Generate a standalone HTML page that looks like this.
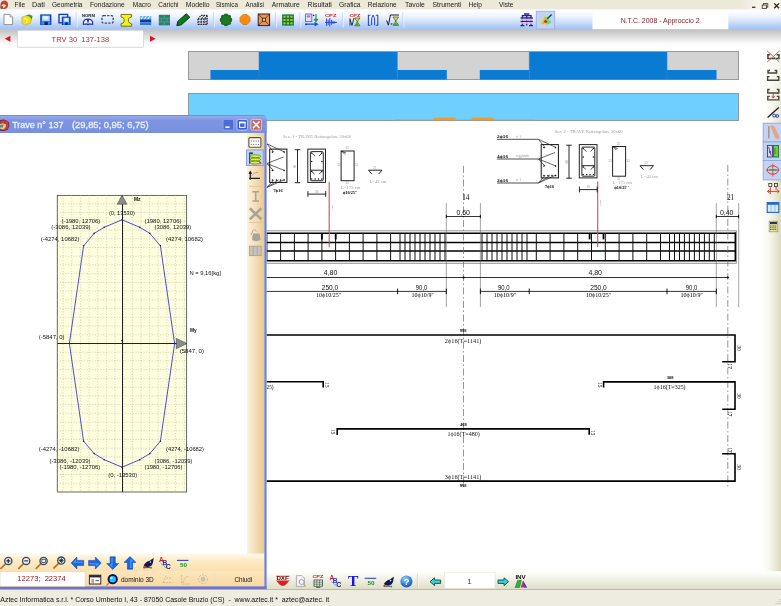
<!DOCTYPE html>
<html><head><meta charset="utf-8"><title>Aztec</title>
<style>
html,body{margin:0;padding:0;background:#fff;overflow:hidden;}
body{width:781px;height:606px;font-family:"Liberation Sans",sans-serif;}
svg{display:block;position:absolute;left:0;top:0;will-change:transform;}
text{white-space:pre;}
</style></head><body>
<svg width="781" height="606" viewBox="0 0 781 606">
<defs>
<linearGradient id="gTb1" x1="0" y1="0" x2="0" y2="1"><stop offset="0" stop-color="#ffffff"/><stop offset="0.3" stop-color="#f0f5fe"/><stop offset="0.6" stop-color="#cfdffa"/><stop offset="0.88" stop-color="#a8c6f7"/><stop offset="1" stop-color="#a9c3ee"/></linearGradient>
<linearGradient id="gTb2" x1="0" y1="0" x2="0" y2="1"><stop offset="0" stop-color="#c2c2c2"/><stop offset="0.75" stop-color="#fbfbfb"/><stop offset="1" stop-color="#ffffff"/></linearGradient>
<linearGradient id="gRt" x1="0" y1="0" x2="1" y2="0"><stop offset="0" stop-color="#ffffff"/><stop offset="0.3" stop-color="#fcfcf6"/><stop offset="0.6" stop-color="#f0efdf"/><stop offset="1" stop-color="#dbdabc"/></linearGradient>
<linearGradient id="gBt" x1="0" y1="0" x2="0" y2="1"><stop offset="0" stop-color="#ffffff"/><stop offset="0.5" stop-color="#efeee2"/><stop offset="1" stop-color="#dddcc6"/></linearGradient>
<linearGradient id="gWr" x1="0" y1="0" x2="1" y2="0"><stop offset="0" stop-color="#fdf3dd"/><stop offset="1" stop-color="#ebc98f"/></linearGradient>
<linearGradient id="gWb" x1="0" y1="0" x2="0" y2="1"><stop offset="0" stop-color="#fffaf0"/><stop offset="0.35" stop-color="#fdecc8"/><stop offset="1" stop-color="#fbdfae"/></linearGradient>
<linearGradient id="gWb2" x1="0" y1="0" x2="0" y2="1"><stop offset="0" stop-color="#fce6bc"/><stop offset="1" stop-color="#f8d9a2"/></linearGradient>
<linearGradient id="gTitle" x1="0" y1="0" x2="0" y2="1"><stop offset="0" stop-color="#6a80cc"/><stop offset="0.08" stop-color="#94a8ea"/><stop offset="0.3" stop-color="#7e96e2"/><stop offset="1" stop-color="#778fdc"/></linearGradient>
<linearGradient id="gMenuR" x1="0" y1="0" x2="1" y2="0"><stop offset="0" stop-color="#ece9d8"/><stop offset="0.4" stop-color="#f5f3ea"/><stop offset="1" stop-color="#f5f3ea"/></linearGradient>
<linearGradient id="gRtFade" x1="0" y1="0" x2="0" y2="1"><stop offset="0" stop-color="#ffffff" stop-opacity="0.85"/><stop offset="1" stop-color="#ffffff" stop-opacity="0"/></linearGradient>
</defs>
<rect x="0" y="0" width="781" height="606" fill="#ffffff" />
<rect x="0" y="0" width="781" height="9.7" fill="#ece9d8" />
<rect x="740" y="0" width="41" height="9.4" fill="url(#gMenuR)" />
<rect x="0" y="9.6" width="781" height="20.6" fill="url(#gTb1)" />
<rect x="0" y="30" width="781" height="18" fill="url(#gTb2)" />
<rect x="760" y="47" width="21" height="524.5" fill="url(#gRt)" />
<rect x="760" y="47" width="21" height="110" fill="url(#gRtFade)" />
<rect x="266" y="571.5" width="515" height="18" fill="url(#gBt)" />
<line x1="266" y1="589.5" x2="781" y2="589.5" stroke="#b3ae9a" stroke-width="1" />
<rect x="0" y="589.8" width="781" height="16.2" fill="#eeece0" />
<rect x="188.5" y="51.5" width="550" height="28" fill="#d3d3d3" stroke="#9a9a9a" stroke-width="1" />
<rect x="210.5" y="70" width="49" height="9.5" fill="#0a7bd2" />
<rect x="259" y="52" width="138.3" height="27.5" fill="#0a7bd2" />
<rect x="397.3" y="70" width="49.5" height="9.5" fill="#0a7bd2" />
<rect x="479.8" y="70" width="49.5" height="9.5" fill="#0a7bd2" />
<rect x="529.3" y="52" width="137.7" height="27.5" fill="#0a7bd2" />
<rect x="667" y="70" width="49.5" height="9.5" fill="#0a7bd2" />
<line x1="259" y1="52" x2="259" y2="79.5" stroke="#3f7fb8" stroke-width="0.6" />
<line x1="397.3" y1="52" x2="397.3" y2="79.5" stroke="#3f7fb8" stroke-width="0.6" />
<line x1="529.3" y1="52" x2="529.3" y2="79.5" stroke="#3f7fb8" stroke-width="0.6" />
<line x1="667" y1="52" x2="667" y2="79.5" stroke="#3f7fb8" stroke-width="0.6" />
<rect x="188.5" y="93.5" width="550" height="27" fill="#6fd0ff" stroke="#8a9aa0" stroke-width="1" />
<rect x="433.5" y="117.6" width="22" height="2.6" fill="#f39a2c" />
<rect x="471.5" y="117.6" width="22" height="2.6" fill="#f39a2c" />
<line x1="395" y1="119.8" x2="535" y2="119.8" stroke="#c8a070" stroke-width="0.8" />
<g id="draw">
<line x1="266" y1="230.8" x2="736.4" y2="230.8" stroke="#666" stroke-width="0.7" />
<line x1="266" y1="263.3" x2="736.4" y2="263.3" stroke="#666" stroke-width="0.7" />
<line x1="736.4" y1="230.8" x2="736.4" y2="263.3" stroke="#666" stroke-width="0.7" />
<line x1="266" y1="233.2" x2="735.3" y2="233.2" stroke="#000" stroke-width="1.5" />
<line x1="266" y1="242.4" x2="735.3" y2="242.4" stroke="#000" stroke-width="1.5" />
<line x1="266" y1="251.1" x2="735.3" y2="251.1" stroke="#000" stroke-width="1.5" />
<line x1="266" y1="260.7" x2="735.3" y2="260.7" stroke="#000" stroke-width="1.5" />
<line x1="735.3" y1="232.3" x2="735.3" y2="261.3" stroke="#000" stroke-width="1.5" />
<line x1="266.9" y1="233" x2="266.9" y2="260.6" stroke="#111" stroke-width="1.0" />
<line x1="280.6" y1="233" x2="280.6" y2="260.6" stroke="#111" stroke-width="1.0" />
<line x1="294.4" y1="233" x2="294.4" y2="260.6" stroke="#111" stroke-width="1.0" />
<line x1="308.1" y1="233" x2="308.1" y2="260.6" stroke="#111" stroke-width="1.0" />
<line x1="321.9" y1="233" x2="321.9" y2="260.6" stroke="#111" stroke-width="1.0" />
<line x1="335.6" y1="233" x2="335.6" y2="260.6" stroke="#111" stroke-width="1.0" />
<line x1="349.4" y1="233" x2="349.4" y2="260.6" stroke="#111" stroke-width="1.0" />
<line x1="363.1" y1="233" x2="363.1" y2="260.6" stroke="#111" stroke-width="1.0" />
<line x1="376.9" y1="233" x2="376.9" y2="260.6" stroke="#111" stroke-width="1.0" />
<line x1="390.6" y1="233" x2="390.6" y2="260.6" stroke="#111" stroke-width="1.0" />
<line x1="400.0" y1="233" x2="400.0" y2="260.6" stroke="#111" stroke-width="1.0" />
<line x1="405.0" y1="233" x2="405.0" y2="260.6" stroke="#111" stroke-width="1.0" />
<line x1="410.0" y1="233" x2="410.0" y2="260.6" stroke="#111" stroke-width="1.0" />
<line x1="415.0" y1="233" x2="415.0" y2="260.6" stroke="#111" stroke-width="1.0" />
<line x1="420.0" y1="233" x2="420.0" y2="260.6" stroke="#111" stroke-width="1.0" />
<line x1="425.0" y1="233" x2="425.0" y2="260.6" stroke="#111" stroke-width="1.0" />
<line x1="430.0" y1="233" x2="430.0" y2="260.6" stroke="#111" stroke-width="1.0" />
<line x1="435.0" y1="233" x2="435.0" y2="260.6" stroke="#111" stroke-width="1.0" />
<line x1="440.0" y1="233" x2="440.0" y2="260.6" stroke="#111" stroke-width="1.0" />
<line x1="445.0" y1="233" x2="445.0" y2="260.6" stroke="#111" stroke-width="1.0" />
<line x1="482.0" y1="233" x2="482.0" y2="260.6" stroke="#111" stroke-width="1.0" />
<line x1="487.0" y1="233" x2="487.0" y2="260.6" stroke="#111" stroke-width="1.0" />
<line x1="492.0" y1="233" x2="492.0" y2="260.6" stroke="#111" stroke-width="1.0" />
<line x1="497.0" y1="233" x2="497.0" y2="260.6" stroke="#111" stroke-width="1.0" />
<line x1="502.0" y1="233" x2="502.0" y2="260.6" stroke="#111" stroke-width="1.0" />
<line x1="507.0" y1="233" x2="507.0" y2="260.6" stroke="#111" stroke-width="1.0" />
<line x1="512.0" y1="233" x2="512.0" y2="260.6" stroke="#111" stroke-width="1.0" />
<line x1="517.0" y1="233" x2="517.0" y2="260.6" stroke="#111" stroke-width="1.0" />
<line x1="522.0" y1="233" x2="522.0" y2="260.6" stroke="#111" stroke-width="1.0" />
<line x1="527.0" y1="233" x2="527.0" y2="260.6" stroke="#111" stroke-width="1.0" />
<line x1="536.3" y1="233" x2="536.3" y2="260.6" stroke="#111" stroke-width="1.0" />
<line x1="550.1" y1="233" x2="550.1" y2="260.6" stroke="#111" stroke-width="1.0" />
<line x1="563.9" y1="233" x2="563.9" y2="260.6" stroke="#111" stroke-width="1.0" />
<line x1="577.7" y1="233" x2="577.7" y2="260.6" stroke="#111" stroke-width="1.0" />
<line x1="591.5" y1="233" x2="591.5" y2="260.6" stroke="#111" stroke-width="1.0" />
<line x1="605.3" y1="233" x2="605.3" y2="260.6" stroke="#111" stroke-width="1.0" />
<line x1="619.1" y1="233" x2="619.1" y2="260.6" stroke="#111" stroke-width="1.0" />
<line x1="632.9" y1="233" x2="632.9" y2="260.6" stroke="#111" stroke-width="1.0" />
<line x1="646.7" y1="233" x2="646.7" y2="260.6" stroke="#111" stroke-width="1.0" />
<line x1="660.5" y1="233" x2="660.5" y2="260.6" stroke="#111" stroke-width="1.0" />
<line x1="669.5" y1="233" x2="669.5" y2="260.6" stroke="#111" stroke-width="1.0" />
<line x1="674.5" y1="233" x2="674.5" y2="260.6" stroke="#111" stroke-width="1.0" />
<line x1="679.5" y1="233" x2="679.5" y2="260.6" stroke="#111" stroke-width="1.0" />
<line x1="684.4" y1="233" x2="684.4" y2="260.6" stroke="#111" stroke-width="1.0" />
<line x1="689.4" y1="233" x2="689.4" y2="260.6" stroke="#111" stroke-width="1.0" />
<line x1="694.4" y1="233" x2="694.4" y2="260.6" stroke="#111" stroke-width="1.0" />
<line x1="699.4" y1="233" x2="699.4" y2="260.6" stroke="#111" stroke-width="1.0" />
<line x1="704.4" y1="233" x2="704.4" y2="260.6" stroke="#111" stroke-width="1.0" />
<line x1="709.3" y1="233" x2="709.3" y2="260.6" stroke="#111" stroke-width="1.0" />
<line x1="714.3" y1="233" x2="714.3" y2="260.6" stroke="#111" stroke-width="1.0" />
<line x1="321.9" y1="233" x2="321.9" y2="239.4" stroke="#000" stroke-width="1.8" />
<line x1="335.7" y1="233" x2="335.7" y2="239.4" stroke="#000" stroke-width="1.8" />
<line x1="589.6" y1="233" x2="589.6" y2="239.4" stroke="#000" stroke-width="1.8" />
<line x1="603.5" y1="233" x2="603.5" y2="239.4" stroke="#000" stroke-width="1.8" />
<line x1="329.2" y1="181.7" x2="329.2" y2="247.3" stroke="#c8505a" stroke-width="1.1" />
<line x1="597.7" y1="181.5" x2="597.7" y2="247.0" stroke="#c8505a" stroke-width="1.1" />
<text x="331.5" y="205" font-family="Liberation Serif, sans-serif" font-size="2.6" fill="#b06068" transform="rotate(90 331.5 205)">Sez.1</text>
<text x="600" y="200" font-family="Liberation Serif, sans-serif" font-size="2.6" fill="#b06068" transform="rotate(90 600 200)">Sez.2</text>
<line x1="463.5" y1="166" x2="463.5" y2="487" stroke="#6a6a6a" stroke-width="0.7" stroke-dasharray="7 2.5 1.5 2.5"/>
<line x1="727.8" y1="165" x2="727.8" y2="487" stroke="#6a6a6a" stroke-width="0.7" stroke-dasharray="7 2.5 1.5 2.5"/>
<line x1="446.3" y1="203" x2="446.3" y2="307" stroke="#666" stroke-width="0.6" />
<line x1="480.4" y1="203" x2="480.4" y2="307" stroke="#666" stroke-width="0.6" />
<line x1="716.3" y1="203" x2="716.3" y2="307" stroke="#666" stroke-width="0.6" />
<line x1="738.7" y1="203" x2="738.7" y2="307" stroke="#666" stroke-width="0.6" />
<line x1="446.3" y1="216.5" x2="480.4" y2="216.5" stroke="#000" stroke-width="0.8" />
<line x1="716.3" y1="216.5" x2="738.7" y2="216.5" stroke="#000" stroke-width="0.8" />
<line x1="446.3" y1="214.8" x2="446.3" y2="218.2" stroke="#000" stroke-width="0.9" />
<line x1="480.4" y1="214.8" x2="480.4" y2="218.2" stroke="#000" stroke-width="0.9" />
<line x1="716.3" y1="214.8" x2="716.3" y2="218.2" stroke="#000" stroke-width="0.9" />
<line x1="738.7" y1="214.8" x2="738.7" y2="218.2" stroke="#000" stroke-width="0.9" />
<text x="462.2" y="199.6" font-family="Liberation Serif, sans-serif" font-size="8" fill="#111" textLength="7.2" lengthAdjust="spacingAndGlyphs" >14</text>
<text x="727" y="199.6" font-family="Liberation Serif, sans-serif" font-size="8" fill="#111" textLength="7.2" lengthAdjust="spacingAndGlyphs" >21</text>
<text x="456.4" y="215.0" font-family="Liberation Sans, sans-serif" font-size="8" fill="#111" textLength="13.6" lengthAdjust="spacingAndGlyphs" >0,60</text>
<text x="719.9" y="215.0" font-family="Liberation Sans, sans-serif" font-size="8" fill="#111" textLength="13.6" lengthAdjust="spacingAndGlyphs" >0,40</text>
<line x1="266" y1="277.5" x2="463.6" y2="277.5" stroke="#000" stroke-width="0.8" />
<line x1="463.6" y1="277.5" x2="727.8" y2="277.5" stroke="#000" stroke-width="0.8" />
<circle cx="463.6" cy="277.5" r="1.1" fill="#000"/><circle cx="727.8" cy="277.5" r="1.1" fill="#000"/>
<text x="323.8" y="275.1" font-family="Liberation Sans, sans-serif" font-size="8" fill="#111" textLength="13.6" lengthAdjust="spacingAndGlyphs" >4,80</text>
<text x="588.4" y="275.1" font-family="Liberation Sans, sans-serif" font-size="8" fill="#111" textLength="13.6" lengthAdjust="spacingAndGlyphs" >4,80</text>
<line x1="266" y1="291.4" x2="446.3" y2="291.4" stroke="#000" stroke-width="0.8" />
<line x1="480.4" y1="291.4" x2="716.3" y2="291.4" stroke="#000" stroke-width="0.8" />
<line x1="397.6" y1="288.6" x2="397.6" y2="294.2" stroke="#000" stroke-width="0.9" />
<line x1="446.3" y1="288.6" x2="446.3" y2="294.2" stroke="#000" stroke-width="0.9" />
<line x1="480.4" y1="288.6" x2="480.4" y2="294.2" stroke="#000" stroke-width="0.9" />
<line x1="529.2" y1="288.6" x2="529.2" y2="294.2" stroke="#000" stroke-width="0.9" />
<line x1="667.0" y1="288.6" x2="667.0" y2="294.2" stroke="#000" stroke-width="0.9" />
<line x1="716.3" y1="288.6" x2="716.3" y2="294.2" stroke="#000" stroke-width="0.9" />
<text x="321.8" y="289.6" font-family="Liberation Sans, sans-serif" font-size="6.6" fill="#111" textLength="16.5" lengthAdjust="spacingAndGlyphs" >250,0</text>
<text x="590.3" y="290.0" font-family="Liberation Sans, sans-serif" font-size="6.6" fill="#111" textLength="16.5" lengthAdjust="spacingAndGlyphs" >250,0</text>
<text x="415.8" y="290.0" font-family="Liberation Sans, sans-serif" font-size="6.6" fill="#111" textLength="11.6" lengthAdjust="spacingAndGlyphs" >90,0</text>
<text x="498.0" y="290.0" font-family="Liberation Sans, sans-serif" font-size="6.6" fill="#111" textLength="11.6" lengthAdjust="spacingAndGlyphs" >90,0</text>
<text x="685.8" y="290.0" font-family="Liberation Sans, sans-serif" font-size="6.6" fill="#111" textLength="11.6" lengthAdjust="spacingAndGlyphs" >90,0</text>
<text x="316.0" y="297.2" font-family="Liberation Serif, sans-serif" font-size="5.6" fill="#000" textLength="25" lengthAdjust="spacingAndGlyphs" >10ϕ10/25''</text>
<text x="586.0" y="297.2" font-family="Liberation Serif, sans-serif" font-size="5.6" fill="#000" textLength="25" lengthAdjust="spacingAndGlyphs" >10ϕ10/25''</text>
<text x="411.6" y="297.2" font-family="Liberation Serif, sans-serif" font-size="5.6" fill="#000" textLength="22" lengthAdjust="spacingAndGlyphs" >10ϕ10/9''</text>
<text x="493.8" y="297.2" font-family="Liberation Serif, sans-serif" font-size="5.6" fill="#000" textLength="22" lengthAdjust="spacingAndGlyphs" >10ϕ10/9''</text>
<text x="680.6" y="297.2" font-family="Liberation Serif, sans-serif" font-size="5.6" fill="#000" textLength="22" lengthAdjust="spacingAndGlyphs" >10ϕ10/9''</text>
<path d="M266 335 H735 V361.8 H722.2" fill="none" stroke="#000" stroke-width="1.6" stroke-linejoin="miter"/>
<path d="M266 381.7 H323.2 V387.4" fill="none" stroke="#000" stroke-width="1.6" stroke-linejoin="miter"/>
<path d="M603.6 387.6 V381.9 H735 V409.3 H722.2" fill="none" stroke="#000" stroke-width="1.6" stroke-linejoin="miter"/>
<path d="M337.2 434.9 V428.9 H589.2 V434.8" fill="none" stroke="#000" stroke-width="1.6" stroke-linejoin="miter"/>
<path d="M266 481.1 H735 V453.7 H722.2" fill="none" stroke="#000" stroke-width="1.6" stroke-linejoin="miter"/>
<text x="459.7" y="332.2" font-family="Liberation Serif, sans-serif" font-size="4" fill="#000" textLength="6.8" lengthAdjust="spacingAndGlyphs" font-weight="bold" >998</text>
<text x="444.8" y="342.6" font-family="Liberation Serif, sans-serif" font-size="6" fill="#111" textLength="36.6" lengthAdjust="spacingAndGlyphs" >2ϕ16(T=1141)</text>
<text x="266.5" y="389.2" font-family="Liberation Serif, sans-serif" font-size="6" fill="#111" textLength="7" lengthAdjust="spacingAndGlyphs" >25)</text>
<text x="666.8" y="379.2" font-family="Liberation Serif, sans-serif" font-size="4" fill="#000" textLength="6.8" lengthAdjust="spacingAndGlyphs" font-weight="bold" >308</text>
<text x="653.6" y="389.4" font-family="Liberation Serif, sans-serif" font-size="6" fill="#111" textLength="32" lengthAdjust="spacingAndGlyphs" >1ϕ16(T=325)</text>
<text x="459.9" y="426.2" font-family="Liberation Serif, sans-serif" font-size="4" fill="#000" textLength="6.8" lengthAdjust="spacingAndGlyphs" font-weight="bold" >468</text>
<text x="447.4" y="436.3" font-family="Liberation Serif, sans-serif" font-size="6" fill="#111" textLength="32.4" lengthAdjust="spacingAndGlyphs" >1ϕ16(T=480)</text>
<text x="444.8" y="479.4" font-family="Liberation Serif, sans-serif" font-size="6" fill="#111" textLength="36.6" lengthAdjust="spacingAndGlyphs" >3ϕ16(T=1141)</text>
<text x="459.7" y="486.6" font-family="Liberation Serif, sans-serif" font-size="4" fill="#000" textLength="6.8" lengthAdjust="spacingAndGlyphs" font-weight="bold" >998</text>
<text x="324.8" y="382.3" font-family="Liberation Serif, sans-serif" font-size="5.2" fill="#000" transform="rotate(90 324.8 382.3)">15</text>
<text x="591.4" y="430.2" font-family="Liberation Serif, sans-serif" font-size="5.2" fill="#000" transform="rotate(90 591.4 430.2)">15</text>
<text x="331.0" y="429.2" font-family="Liberation Serif, sans-serif" font-size="5.2" fill="#000" transform="rotate(90 331.0 429.2)">15</text>
<text x="597.6" y="382.2" font-family="Liberation Serif, sans-serif" font-size="5.2" fill="#000" transform="rotate(90 597.6 382.2)">15</text>
<text x="737.4" y="345.6" font-family="Liberation Serif, sans-serif" font-size="5.2" fill="#000" transform="rotate(90 737.4 345.6)">30</text>
<text x="737.4" y="393.4" font-family="Liberation Serif, sans-serif" font-size="5.2" fill="#000" transform="rotate(90 737.4 393.4)">30</text>
<text x="737.4" y="464.6" font-family="Liberation Serif, sans-serif" font-size="5.2" fill="#000" transform="rotate(90 737.4 464.6)">30</text>
<text x="727.6" y="363.6" font-family="Liberation Serif, sans-serif" font-size="5.2" fill="#000" transform="rotate(90 727.6 363.6)">17</text>
<text x="727.6" y="411.2" font-family="Liberation Serif, sans-serif" font-size="5.2" fill="#000" transform="rotate(90 727.6 411.2)">17</text>
<text x="727.6" y="447.4" font-family="Liberation Serif, sans-serif" font-size="5.2" fill="#000" transform="rotate(90 727.6 447.4)">17</text>
<text x="554.5" y="133.4" font-family="Liberation Serif, sans-serif" font-size="4.4" fill="#9a9a9a" textLength="68" lengthAdjust="spacingAndGlyphs" >Sez. 2 - TRAVE Rettangolare 30x60</text>
<line x1="497" y1="139.3" x2="538.4" y2="139.3" stroke="#222" stroke-width="0.8" />
<text x="497" y="137.9" font-family="Liberation Serif, sans-serif" font-size="4.6" fill="#000" textLength="11" lengthAdjust="spacingAndGlyphs" font-weight="bold" >2ϕ16</text>
<text x="516" y="137.70000000000002" font-family="Liberation Serif, sans-serif" font-size="3.2" fill="#999" >n° 1</text>
<line x1="497" y1="159.0" x2="538.4" y2="159.0" stroke="#222" stroke-width="0.8" />
<text x="497" y="157.6" font-family="Liberation Serif, sans-serif" font-size="4.6" fill="#000" textLength="11" lengthAdjust="spacingAndGlyphs" font-weight="bold" >4ϕ16</text>
<text x="516" y="157.4" font-family="Liberation Serif, sans-serif" font-size="3.2" fill="#999" >reggistaffe</text>
<line x1="497" y1="183.0" x2="538.4" y2="183.0" stroke="#222" stroke-width="0.8" />
<text x="497" y="181.6" font-family="Liberation Serif, sans-serif" font-size="4.6" fill="#000" textLength="11" lengthAdjust="spacingAndGlyphs" font-weight="bold" >2ϕ16</text>
<text x="516" y="181.4" font-family="Liberation Serif, sans-serif" font-size="3.2" fill="#999" >n° 1</text>
<rect x="541.2" y="144.6" width="17.2" height="33.3" fill="none" stroke="#111" stroke-width="1.0" />
<line x1="538.4" y1="139.3" x2="556" y2="147.5" stroke="#222" stroke-width="0.7" />
<line x1="538.4" y1="139.3" x2="545" y2="147.5" stroke="#222" stroke-width="0.7" />
<line x1="538.4" y1="159" x2="555" y2="152.5" stroke="#222" stroke-width="0.7" />
<line x1="538.4" y1="159" x2="556" y2="166" stroke="#222" stroke-width="0.7" />
<line x1="538.4" y1="159" x2="545" y2="166" stroke="#222" stroke-width="0.7" />
<line x1="538.4" y1="183" x2="545" y2="175.5" stroke="#222" stroke-width="0.7" />
<line x1="538.4" y1="183" x2="550" y2="175.5" stroke="#222" stroke-width="0.7" />
<line x1="538.4" y1="183" x2="556" y2="175" stroke="#222" stroke-width="0.7" />
<circle cx="544" cy="147.6" r="0.8" fill="#111"/>
<circle cx="555.6" cy="147.6" r="0.8" fill="#111"/>
<circle cx="544" cy="166" r="0.8" fill="#111"/>
<circle cx="555.6" cy="166" r="0.8" fill="#111"/>
<circle cx="544" cy="175.6" r="0.8" fill="#111"/>
<circle cx="548" cy="175.6" r="0.8" fill="#111"/>
<circle cx="552" cy="175.6" r="0.8" fill="#111"/>
<circle cx="555.6" cy="175.6" r="0.8" fill="#111"/>
<text x="545" y="187.8" font-family="Liberation Serif, sans-serif" font-size="4.6" fill="#000" textLength="9" lengthAdjust="spacingAndGlyphs" font-weight="bold" >7ϕ16</text>
<line x1="569" y1="145.2" x2="569" y2="178.2" stroke="#111" stroke-width="0.9" />
<line x1="566.2" y1="145.2" x2="571.8" y2="145.2" stroke="#111" stroke-width="0.9" />
<line x1="566.2" y1="178.2" x2="571.8" y2="178.2" stroke="#111" stroke-width="0.9" />
<text x="567.6" y="163.5" font-family="Liberation Serif, sans-serif" font-size="3.2" fill="#8a8a8a" transform="rotate(-90 567.6 163.5)">60</text>
<rect x="579.3" y="144.6" width="17.7" height="33.3" fill="none" stroke="#222" stroke-width="1.0" />
<rect x="581.9" y="147.1" width="12.9" height="29.1" fill="none" stroke="#111" stroke-width="0.9" rx="1"/>
<line x1="581.9" y1="165.7" x2="594.8" y2="165.7" stroke="#111" stroke-width="0.9" />
<circle cx="583.2" cy="148.6" r="0.75" fill="#111"/>
<circle cx="593.4" cy="148.6" r="0.75" fill="#111"/>
<circle cx="583.2" cy="157" r="0.75" fill="#111"/>
<circle cx="593.4" cy="157" r="0.75" fill="#111"/>
<circle cx="583.2" cy="174.6" r="0.75" fill="#111"/>
<circle cx="586.6" cy="174.6" r="0.75" fill="#111"/>
<circle cx="590" cy="174.6" r="0.75" fill="#111"/>
<circle cx="593.4" cy="174.6" r="0.75" fill="#111"/>
<circle cx="583.2" cy="167" r="0.75" fill="#111"/>
<circle cx="593.4" cy="167" r="0.75" fill="#111"/>
<line x1="583.2" y1="148.6" x2="586.5" y2="151.5" stroke="#111" stroke-width="0.7" />
<line x1="593.4" y1="148.6" x2="590.5" y2="151.5" stroke="#111" stroke-width="0.7" />
<line x1="583.2" y1="167" x2="586" y2="169.5" stroke="#111" stroke-width="0.7" />
<line x1="593.4" y1="167" x2="590.6" y2="169.5" stroke="#111" stroke-width="0.7" />
<line x1="579.4" y1="189.6" x2="597.2" y2="189.6" stroke="#111" stroke-width="0.9" />
<line x1="579.4" y1="186.6" x2="579.4" y2="192.4" stroke="#111" stroke-width="0.9" />
<line x1="597.2" y1="186.6" x2="597.2" y2="192.4" stroke="#111" stroke-width="0.9" />
<text x="586.6" y="188.2" font-family="Liberation Serif, sans-serif" font-size="3.2" fill="#8a8a8a" >30</text>
<rect x="612.6" y="146.5" width="13" height="29.7" fill="none" stroke="#222" stroke-width="1.0" />
<line x1="613" y1="146.6" x2="616.4" y2="150" stroke="#111" stroke-width="0.7" />
<line x1="613" y1="146.6" x2="617.6" y2="148.6" stroke="#111" stroke-width="0.7" />
<text x="617" y="144.6" font-family="Liberation Serif, sans-serif" font-size="3.2" fill="#8a8a8a" >23</text>
<text x="617" y="179.6" font-family="Liberation Serif, sans-serif" font-size="3.2" fill="#8a8a8a" >23</text>
<text x="608.4" y="161.6" font-family="Liberation Serif, sans-serif" font-size="3.2" fill="#8a8a8a" >53</text>
<text x="626.4" y="161.6" font-family="Liberation Serif, sans-serif" font-size="3.2" fill="#8a8a8a" >53</text>
<text x="612.4" y="184.0" font-family="Liberation Serif, sans-serif" font-size="4.2" fill="#9a9a9a" textLength="19.5" lengthAdjust="spacingAndGlyphs" >L=175 cm</text>
<text x="614.2" y="189.2" font-family="Liberation Serif, sans-serif" font-size="4.4" fill="#000" textLength="14.5" lengthAdjust="spacingAndGlyphs" font-weight="bold" >ϕ10/25''</text>
<path d="M643.4 169.6 L640 165.7 H653.5 L650.1 169.6" fill="none" stroke="#111" stroke-width="0.9"/>
<text x="644.6" y="164.0" font-family="Liberation Serif, sans-serif" font-size="3.2" fill="#8a8a8a" >23</text>
<text x="641" y="178.2" font-family="Liberation Serif, sans-serif" font-size="4.2" fill="#9a9a9a" textLength="17" lengthAdjust="spacingAndGlyphs" >L=43 cm</text>
<text x="283.0" y="137.9" font-family="Liberation Serif, sans-serif" font-size="4.4" fill="#9a9a9a" textLength="68" lengthAdjust="spacingAndGlyphs" >Sez. 1 - TRAVE Rettangolare 30x60</text>
<rect x="269.70000000000005" y="149.1" width="17.2" height="33.3" fill="none" stroke="#111" stroke-width="1.0" />
<line x1="266.9" y1="143.8" x2="284.5" y2="152.0" stroke="#222" stroke-width="0.7" />
<line x1="266.9" y1="143.8" x2="273.5" y2="152.0" stroke="#222" stroke-width="0.7" />
<line x1="266.9" y1="163.5" x2="283.5" y2="157.0" stroke="#222" stroke-width="0.7" />
<line x1="266.9" y1="163.5" x2="284.5" y2="170.5" stroke="#222" stroke-width="0.7" />
<line x1="266.9" y1="163.5" x2="273.5" y2="170.5" stroke="#222" stroke-width="0.7" />
<line x1="266.9" y1="187.5" x2="273.5" y2="180.0" stroke="#222" stroke-width="0.7" />
<line x1="266.9" y1="187.5" x2="278.5" y2="180.0" stroke="#222" stroke-width="0.7" />
<line x1="266.9" y1="187.5" x2="284.5" y2="179.5" stroke="#222" stroke-width="0.7" />
<circle cx="272.5" cy="152.1" r="0.8" fill="#111"/>
<circle cx="284.1" cy="152.1" r="0.8" fill="#111"/>
<circle cx="272.5" cy="170.5" r="0.8" fill="#111"/>
<circle cx="284.1" cy="170.5" r="0.8" fill="#111"/>
<circle cx="272.5" cy="180.1" r="0.8" fill="#111"/>
<circle cx="276.5" cy="180.1" r="0.8" fill="#111"/>
<circle cx="280.5" cy="180.1" r="0.8" fill="#111"/>
<circle cx="284.1" cy="180.1" r="0.8" fill="#111"/>
<text x="273.5" y="192.3" font-family="Liberation Serif, sans-serif" font-size="4.6" fill="#000" textLength="9" lengthAdjust="spacingAndGlyphs" font-weight="bold" >7ϕ16</text>
<line x1="297.5" y1="149.7" x2="297.5" y2="182.7" stroke="#111" stroke-width="0.9" />
<line x1="294.70000000000005" y1="149.7" x2="300.29999999999995" y2="149.7" stroke="#111" stroke-width="0.9" />
<line x1="294.70000000000005" y1="182.7" x2="300.29999999999995" y2="182.7" stroke="#111" stroke-width="0.9" />
<text x="296.1" y="168.0" font-family="Liberation Serif, sans-serif" font-size="3.2" fill="#8a8a8a" transform="rotate(-90 296.1 168.0)">60</text>
<rect x="307.79999999999995" y="149.1" width="17.7" height="33.3" fill="none" stroke="#222" stroke-width="1.0" />
<rect x="310.4" y="151.6" width="12.9" height="29.1" fill="none" stroke="#111" stroke-width="0.9" rx="1"/>
<line x1="310.4" y1="170.2" x2="323.29999999999995" y2="170.2" stroke="#111" stroke-width="0.9" />
<circle cx="311.70000000000005" cy="153.1" r="0.75" fill="#111"/>
<circle cx="321.9" cy="153.1" r="0.75" fill="#111"/>
<circle cx="311.70000000000005" cy="161.5" r="0.75" fill="#111"/>
<circle cx="321.9" cy="161.5" r="0.75" fill="#111"/>
<circle cx="311.70000000000005" cy="179.1" r="0.75" fill="#111"/>
<circle cx="315.1" cy="179.1" r="0.75" fill="#111"/>
<circle cx="318.5" cy="179.1" r="0.75" fill="#111"/>
<circle cx="321.9" cy="179.1" r="0.75" fill="#111"/>
<circle cx="311.70000000000005" cy="171.5" r="0.75" fill="#111"/>
<circle cx="321.9" cy="171.5" r="0.75" fill="#111"/>
<line x1="311.70000000000005" y1="153.1" x2="315.0" y2="156.0" stroke="#111" stroke-width="0.7" />
<line x1="321.9" y1="153.1" x2="319.0" y2="156.0" stroke="#111" stroke-width="0.7" />
<line x1="311.70000000000005" y1="171.5" x2="314.5" y2="174.0" stroke="#111" stroke-width="0.7" />
<line x1="321.9" y1="171.5" x2="319.1" y2="174.0" stroke="#111" stroke-width="0.7" />
<line x1="307.9" y1="194.1" x2="325.70000000000005" y2="194.1" stroke="#111" stroke-width="0.9" />
<line x1="307.9" y1="191.1" x2="307.9" y2="196.9" stroke="#111" stroke-width="0.9" />
<line x1="325.70000000000005" y1="191.1" x2="325.70000000000005" y2="196.9" stroke="#111" stroke-width="0.9" />
<text x="315.1" y="192.7" font-family="Liberation Serif, sans-serif" font-size="3.2" fill="#8a8a8a" >30</text>
<rect x="341.1" y="151.0" width="13" height="29.7" fill="none" stroke="#222" stroke-width="1.0" />
<line x1="341.5" y1="151.1" x2="344.9" y2="154.5" stroke="#111" stroke-width="0.7" />
<line x1="341.5" y1="151.1" x2="346.1" y2="153.1" stroke="#111" stroke-width="0.7" />
<text x="345.5" y="149.1" font-family="Liberation Serif, sans-serif" font-size="3.2" fill="#8a8a8a" >23</text>
<text x="345.5" y="184.1" font-family="Liberation Serif, sans-serif" font-size="3.2" fill="#8a8a8a" >23</text>
<text x="336.9" y="166.1" font-family="Liberation Serif, sans-serif" font-size="3.2" fill="#8a8a8a" >53</text>
<text x="354.9" y="166.1" font-family="Liberation Serif, sans-serif" font-size="3.2" fill="#8a8a8a" >53</text>
<text x="340.9" y="188.5" font-family="Liberation Serif, sans-serif" font-size="4.2" fill="#9a9a9a" textLength="19.5" lengthAdjust="spacingAndGlyphs" >L=175 cm</text>
<text x="342.70000000000005" y="193.7" font-family="Liberation Serif, sans-serif" font-size="4.4" fill="#000" textLength="14.5" lengthAdjust="spacingAndGlyphs" font-weight="bold" >ϕ10/25''</text>
<path d="M371.9 174.1 L368.5 170.2 H382.0 L378.6 174.1" fill="none" stroke="#111" stroke-width="0.9"/>
<text x="373.1" y="168.5" font-family="Liberation Serif, sans-serif" font-size="3.2" fill="#8a8a8a" >23</text>
<text x="369.5" y="182.7" font-family="Liberation Serif, sans-serif" font-size="4.2" fill="#9a9a9a" textLength="17" lengthAdjust="spacingAndGlyphs" >L=43 cm</text>
</g>
<g id="win">
<rect x="0" y="131" width="266.6" height="458" fill="#ffffff" />
<rect x="264.2" y="120" width="2.4" height="468" fill="#6f80d6" />
<rect x="247" y="133" width="17.2" height="421" fill="url(#gWr)" />
<rect x="0" y="553.6" width="264.2" height="17.6" fill="url(#gWb)" />
<rect x="0" y="571" width="264.2" height="16" fill="url(#gWb2)" />
<rect x="0" y="586.4" width="266.6" height="3.2" fill="#6e72c8" />
<path d="M0 115 H262.6 Q266.6 115 266.6 119 V133 H0 Z" fill="url(#gTitle)"/>
<path d="M0 120.4 Q5 118.6 8.6 122.4 Q9.6 126.4 7.6 129.4 Q4 131.6 0 130.2 Z" fill="#d8382a" stroke="#3a2a5a" stroke-width="0.7"/>
<path d="M0 124 Q3 122.6 6 124.6 Q6.4 127.6 4 129 Q1.6 129.6 0 128.6Z" fill="#f0c8a0"/><path d="M0 125 L3.6 124.6 L3 127.4 L0 127.6Z" fill="#5a8a7a"/>
<text x="12.2" y="128.0" font-family="Liberation Sans, sans-serif" font-size="8.2" fill="#e6ecfc" textLength="51.2" lengthAdjust="spacingAndGlyphs" stroke="#e6ecfc" stroke-width="0.35">Trave n° 137</text>
<text x="72" y="128.0" font-family="Liberation Sans, sans-serif" font-size="8.2" fill="#e6ecfc" textLength="76.6" lengthAdjust="spacingAndGlyphs" stroke="#e6ecfc" stroke-width="0.35">(29,85; 0,95; 6,75)</text>
<rect x="223" y="119.4" width="10.7" height="10.7" rx="1.6" fill="#4b6cd9" stroke="#8ea4ec" stroke-width="0.9"/>
<rect x="236.9" y="119.4" width="10.7" height="10.7" rx="1.6" fill="#3f60cf" stroke="#c4d2f8" stroke-width="0.9"/>
<rect x="250.9" y="119.4" width="10.7" height="10.7" rx="1.6" fill="#c66864" stroke="#e8c8d0" stroke-width="0.9"/>
<rect x="225.4" y="126.4" width="4.2" height="1.6" fill="#ffffff" />
<rect x="239.6" y="122.2" width="5.4" height="5.2" fill="none" stroke="#ffffff" stroke-width="1.0" />
<line x1="239.1" y1="122.6" x2="245.5" y2="122.6" stroke="#fff" stroke-width="1.6" />
<path d="M253.4 121.9 L259.1 127.6 M259.1 121.9 L253.4 127.6" stroke="#fff" stroke-width="1.5" stroke-linecap="round"/>
<rect x="57.3" y="195.4" width="129.3" height="296.6" fill="#ffffe0" stroke="#555" stroke-width="0.9" />
<path d="M63.10 195.4 V492.0 M71.75 195.4 V492.0 M80.40 195.4 V492.0 M89.05 195.4 V492.0 M97.70 195.4 V492.0 M106.35 195.4 V492.0 M115.00 195.4 V492.0 M123.65 195.4 V492.0 M132.30 195.4 V492.0 M140.95 195.4 V492.0 M149.60 195.4 V492.0 M158.25 195.4 V492.0 M166.90 195.4 V492.0 M175.55 195.4 V492.0 M184.20 195.4 V492.0 M57.3 352.23 H186.6 M57.3 334.77 H186.6 M57.3 360.96 H186.6 M57.3 326.04 H186.6 M57.3 369.69 H186.6 M57.3 317.31 H186.6 M57.3 378.42 H186.6 M57.3 308.58 H186.6 M57.3 387.15 H186.6 M57.3 299.85 H186.6 M57.3 395.88 H186.6 M57.3 291.12 H186.6 M57.3 404.61 H186.6 M57.3 282.39 H186.6 M57.3 413.34 H186.6 M57.3 273.66 H186.6 M57.3 422.07 H186.6 M57.3 264.93 H186.6 M57.3 430.80 H186.6 M57.3 256.20 H186.6 M57.3 439.53 H186.6 M57.3 247.47 H186.6 M57.3 448.26 H186.6 M57.3 238.74 H186.6 M57.3 456.99 H186.6 M57.3 230.01 H186.6 M57.3 465.72 H186.6 M57.3 221.28 H186.6 M57.3 474.45 H186.6 M57.3 212.55 H186.6 M57.3 483.18 H186.6 M57.3 203.82 H186.6 M57.3 491.91 H186.6" stroke="#bdbda6" stroke-width="0.7" stroke-dasharray="1 1.7" fill="none"/>
<line x1="122.5" y1="195.4" x2="122.5" y2="492.0" stroke="#222" stroke-width="1" />
<line x1="57.3" y1="343.5" x2="186.6" y2="343.5" stroke="#222" stroke-width="1" />
<path d="M122.0 195.2 L126.9 204.2 H117.3 Z" fill="#8c8c8c" stroke="#444" stroke-width="0.6"/>
<path d="M186.9 343.5 L176.4 338.4 V348.8 Z" fill="#8c8c8c" stroke="#444" stroke-width="0.6"/>
<circle cx="122.0" cy="340.6" r="0.9" fill="#222"/>
<polygon points="122.0,219.8 139.8,227.3 149.8,233.4 160.4,245.8 174.6,343.5 160.4,441.2 149.8,453.6 139.8,459.7 122.0,467.2 104.2,459.7 94.2,453.6 83.6,441.2 69.4,343.5 83.6,245.8 94.2,233.4 104.2,227.3" fill="none" stroke="#3a3ad0" stroke-width="0.9"/>
<circle cx="122.0" cy="219.8" r="0.8" fill="#223"/>
<circle cx="139.8" cy="227.3" r="0.8" fill="#223"/>
<circle cx="149.8" cy="233.4" r="0.8" fill="#223"/>
<circle cx="160.4" cy="245.8" r="0.8" fill="#223"/>
<circle cx="174.6" cy="343.5" r="0.8" fill="#223"/>
<circle cx="160.4" cy="441.2" r="0.8" fill="#223"/>
<circle cx="149.8" cy="453.6" r="0.8" fill="#223"/>
<circle cx="139.8" cy="459.7" r="0.8" fill="#223"/>
<circle cx="122.0" cy="467.2" r="0.8" fill="#223"/>
<circle cx="104.2" cy="459.7" r="0.8" fill="#223"/>
<circle cx="94.2" cy="453.6" r="0.8" fill="#223"/>
<circle cx="83.6" cy="441.2" r="0.8" fill="#223"/>
<circle cx="69.4" cy="343.5" r="0.8" fill="#223"/>
<circle cx="83.6" cy="245.8" r="0.8" fill="#223"/>
<circle cx="94.2" cy="233.4" r="0.8" fill="#223"/>
<circle cx="104.2" cy="227.3" r="0.8" fill="#223"/>
<text x="108.9" y="214.7" font-family="Liberation Sans, sans-serif" font-size="5.9" fill="#111" textLength="25.9" lengthAdjust="spacingAndGlyphs" >(0, 13530)</text>
<text x="61.5" y="222.6" font-family="Liberation Sans, sans-serif" font-size="5.9" fill="#111" textLength="38.7" lengthAdjust="spacingAndGlyphs" >(-1980, 12706)</text>
<text x="51.2" y="228.6" font-family="Liberation Sans, sans-serif" font-size="5.9" fill="#111" textLength="39.4" lengthAdjust="spacingAndGlyphs" >(-3086, 12039)</text>
<text x="40.8" y="241.0" font-family="Liberation Sans, sans-serif" font-size="5.9" fill="#111" textLength="38.7" lengthAdjust="spacingAndGlyphs" >(-4274, 10682)</text>
<text x="144.5" y="222.6" font-family="Liberation Sans, sans-serif" font-size="5.9" fill="#111" textLength="37" lengthAdjust="spacingAndGlyphs" >(1980, 12706)</text>
<text x="154.5" y="228.6" font-family="Liberation Sans, sans-serif" font-size="5.9" fill="#111" textLength="36.8" lengthAdjust="spacingAndGlyphs" >(3086, 12039)</text>
<text x="166" y="241.0" font-family="Liberation Sans, sans-serif" font-size="5.9" fill="#111" textLength="37" lengthAdjust="spacingAndGlyphs" >(4274, 10682)</text>
<text x="38.7" y="339.4" font-family="Liberation Sans, sans-serif" font-size="5.9" fill="#111" textLength="25.9" lengthAdjust="spacingAndGlyphs" >(-5847, 0)</text>
<text x="179.7" y="352.5" font-family="Liberation Sans, sans-serif" font-size="5.9" fill="#111" textLength="24.3" lengthAdjust="spacingAndGlyphs" >(5847, 0)</text>
<text x="38.7" y="451.0" font-family="Liberation Sans, sans-serif" font-size="5.9" fill="#111" textLength="40.8" lengthAdjust="spacingAndGlyphs" >(-4274, -10682)</text>
<text x="49.4" y="463.0" font-family="Liberation Sans, sans-serif" font-size="5.9" fill="#111" textLength="41.2" lengthAdjust="spacingAndGlyphs" >(-3086, -12039)</text>
<text x="59.5" y="469.3" font-family="Liberation Sans, sans-serif" font-size="5.9" fill="#111" textLength="40.7" lengthAdjust="spacingAndGlyphs" >(-1980, -12706)</text>
<text x="108.2" y="476.9" font-family="Liberation Sans, sans-serif" font-size="5.9" fill="#111" textLength="29" lengthAdjust="spacingAndGlyphs" >(0, -13530)</text>
<text x="166" y="451.0" font-family="Liberation Sans, sans-serif" font-size="5.9" fill="#111" textLength="38" lengthAdjust="spacingAndGlyphs" >(4274, -10682)</text>
<text x="154.5" y="463.0" font-family="Liberation Sans, sans-serif" font-size="5.9" fill="#111" textLength="38" lengthAdjust="spacingAndGlyphs" >(3086, -12039)</text>
<text x="144.5" y="469.3" font-family="Liberation Sans, sans-serif" font-size="5.9" fill="#111" textLength="38" lengthAdjust="spacingAndGlyphs" >(1980, -12706)</text>
<text x="134" y="201.0" font-family="Liberation Sans, sans-serif" font-size="5.4" fill="#111" textLength="6.6" lengthAdjust="spacingAndGlyphs" font-weight="bold" >Mz</text>
<text x="190" y="331.6" font-family="Liberation Sans, sans-serif" font-size="5.4" fill="#111" textLength="6.8" lengthAdjust="spacingAndGlyphs" font-weight="bold" >My</text>
<text x="189.4" y="274.6" font-family="Liberation Sans, sans-serif" font-size="5.9" fill="#111" textLength="31.6" lengthAdjust="spacingAndGlyphs" >N = 9,16[kg]</text>
<rect x="0" y="571.6" width="85" height="14.6" fill="#ffffff" stroke="#e4d4b0" stroke-width="0.6" />
<text x="17.3" y="581.4" font-family="Liberation Sans, sans-serif" font-size="7" fill="#8a2020" textLength="48.4" lengthAdjust="spacingAndGlyphs" >12273;  22374</text>
<text x="121" y="581.6" font-family="Liberation Sans, sans-serif" font-size="7" fill="#111" textLength="32.8" lengthAdjust="spacingAndGlyphs" >dominio 3D</text>
<text x="234.4" y="581.6" font-family="Liberation Sans, sans-serif" font-size="7" fill="#111" textLength="17.9" lengthAdjust="spacingAndGlyphs" >Chiudi</text>
</g>
<text x="0.3" y="602.4" font-family="Liberation Sans, sans-serif" font-size="6.4" fill="#111" textLength="329" lengthAdjust="spacingAndGlyphs" >Aztec Informatica s.r.l. * Corso Umberto I, 43 - 87050 Casole Bruzio (CS)  -  www.aztec.it *  aztec@aztec. it</text>
<g id="icons">
<path d="M0.5 8.5 Q-0.5 1 4.5 0.6 Q8.6 1.4 8 5.5 Q7.5 8.8 4.4 9 Z" fill="#d43a2a"/>
<path d="M1.6 5.2 Q3.6 3.2 6 5.2 Q5.4 8 3.2 8.2 Q1.6 7.4 1.6 5.2Z" fill="#efe6d6"/>
<path d="M0.4 7.2 L3 6 L3.4 8.6 L1 9Z" fill="#5a6a5a"/>
<text x="14.6" y="7.3" font-family="Liberation Sans, sans-serif" font-size="7" fill="#1a1a1a" textLength="10.4" lengthAdjust="spacingAndGlyphs" >File</text>
<text x="32" y="7.3" font-family="Liberation Sans, sans-serif" font-size="7" fill="#1a1a1a" textLength="12.8" lengthAdjust="spacingAndGlyphs" >Dati</text>
<text x="52" y="7.3" font-family="Liberation Sans, sans-serif" font-size="7" fill="#1a1a1a" textLength="30.5" lengthAdjust="spacingAndGlyphs" >Geometria</text>
<text x="90" y="7.3" font-family="Liberation Sans, sans-serif" font-size="7" fill="#1a1a1a" textLength="34.7" lengthAdjust="spacingAndGlyphs" >Fondazione</text>
<text x="132.7" y="7.3" font-family="Liberation Sans, sans-serif" font-size="7" fill="#1a1a1a" textLength="18.3" lengthAdjust="spacingAndGlyphs" >Macro</text>
<text x="158.3" y="7.3" font-family="Liberation Sans, sans-serif" font-size="7" fill="#1a1a1a" textLength="20.2" lengthAdjust="spacingAndGlyphs" >Carichi</text>
<text x="185.7" y="7.3" font-family="Liberation Sans, sans-serif" font-size="7" fill="#1a1a1a" textLength="24" lengthAdjust="spacingAndGlyphs" >Modello</text>
<text x="215.9" y="7.3" font-family="Liberation Sans, sans-serif" font-size="7" fill="#1a1a1a" textLength="22" lengthAdjust="spacingAndGlyphs" >Sismica</text>
<text x="245.6" y="7.3" font-family="Liberation Sans, sans-serif" font-size="7" fill="#1a1a1a" textLength="18.4" lengthAdjust="spacingAndGlyphs" >Analisi</text>
<text x="271.7" y="7.3" font-family="Liberation Sans, sans-serif" font-size="7" fill="#1a1a1a" textLength="28.2" lengthAdjust="spacingAndGlyphs" >Armature</text>
<text x="307.6" y="7.3" font-family="Liberation Sans, sans-serif" font-size="7" fill="#1a1a1a" textLength="24.3" lengthAdjust="spacingAndGlyphs" >Risultati</text>
<text x="339" y="7.3" font-family="Liberation Sans, sans-serif" font-size="7" fill="#1a1a1a" textLength="21.6" lengthAdjust="spacingAndGlyphs" >Grafica</text>
<text x="367.7" y="7.3" font-family="Liberation Sans, sans-serif" font-size="7" fill="#1a1a1a" textLength="29" lengthAdjust="spacingAndGlyphs" >Relazione</text>
<text x="405" y="7.3" font-family="Liberation Sans, sans-serif" font-size="7" fill="#1a1a1a" textLength="19.8" lengthAdjust="spacingAndGlyphs" >Tavole</text>
<text x="432.5" y="7.3" font-family="Liberation Sans, sans-serif" font-size="7" fill="#1a1a1a" textLength="29" lengthAdjust="spacingAndGlyphs" >Strumenti</text>
<text x="468.6" y="7.3" font-family="Liberation Sans, sans-serif" font-size="7" fill="#1a1a1a" textLength="13.4" lengthAdjust="spacingAndGlyphs" >Help</text>
<text x="499" y="7.3" font-family="Liberation Sans, sans-serif" font-size="7" fill="#1a1a1a" textLength="14.4" lengthAdjust="spacingAndGlyphs" >Viste</text>
<rect x="752" y="6.6" width="3.4" height="1.3" fill="#333" />
<rect x="763.6" y="3.6" width="4.2" height="3.6" fill="none" stroke="#333" stroke-width="0.8" />
<rect x="762.2" y="5.0" width="4.2" height="3.4" fill="#ece9d8" stroke="#333" stroke-width="0.8" />
<path d="M774.2 3.4 L779 8.2 M779 3.4 L774.2 8.2" stroke="#222" stroke-width="1.3"/>
<rect x="592.5" y="10.4" width="135.8" height="18.8" fill="#ffffff" />
<text x="620.7" y="23.0" font-family="Liberation Sans, sans-serif" font-size="7" fill="#8a1c24" textLength="78.9" lengthAdjust="spacingAndGlyphs" >N.T.C. 2008 - Approccio 2</text>
<rect x="17.2" y="30.2" width="126.6" height="17.6" fill="#d6d6d6" rx="1.5"/>
<rect x="18" y="30.8" width="125" height="16" fill="#ffffff" />
<text x="51.6" y="42.0" font-family="Liberation Sans, sans-serif" font-size="7.6" fill="#b03030" textLength="57.5" lengthAdjust="spacingAndGlyphs" >TRV 30  137-138</text>
<path d="M4.8 38.8 L10.4 35.8 V41.8 Z" fill="#e0101c"/>
<path d="M155.6 38.8 L150 35.8 V41.8 Z" fill="#e0101c"/>
<line x1="76.3" y1="12.5" x2="76.3" y2="27.5" stroke="#b8c8e4" stroke-width="0.8" />
<line x1="77.1" y1="12.5" x2="77.1" y2="27.5" stroke="#ffffff" stroke-width="0.6" />
<line x1="213.6" y1="12.5" x2="213.6" y2="27.5" stroke="#b8c8e4" stroke-width="0.8" />
<line x1="214.4" y1="12.5" x2="214.4" y2="27.5" stroke="#ffffff" stroke-width="0.6" />
<line x1="275.5" y1="12.5" x2="275.5" y2="27.5" stroke="#b8c8e4" stroke-width="0.8" />
<line x1="276.3" y1="12.5" x2="276.3" y2="27.5" stroke="#ffffff" stroke-width="0.6" />
<line x1="300" y1="12.5" x2="300" y2="27.5" stroke="#b8c8e4" stroke-width="0.8" />
<line x1="300.8" y1="12.5" x2="300.8" y2="27.5" stroke="#ffffff" stroke-width="0.6" />
<line x1="342.4" y1="12.5" x2="342.4" y2="27.5" stroke="#b8c8e4" stroke-width="0.8" />
<line x1="343.2" y1="12.5" x2="343.2" y2="27.5" stroke="#ffffff" stroke-width="0.6" />
<line x1="403" y1="12.5" x2="403" y2="27.5" stroke="#b8c8e4" stroke-width="0.8" />
<line x1="403.8" y1="12.5" x2="403.8" y2="27.5" stroke="#ffffff" stroke-width="0.6" />
<path d="M4 14.4 H10 L12.6 17 V24.6 H4 Z" fill="#fdfdfd" stroke="#8a8a8a" stroke-width="0.9"/><path d="M10 14.4 V17 H12.6" fill="#e8e8e8" stroke="#8a8a8a" stroke-width="0.7"/>
<path d="M21.8 17.2 L27 15.4 L31.8 18 L30.4 23.4 L24.6 25 L22 23.2 Z" fill="#f2dd22" stroke="#c8a800" stroke-width="0.6"/>
<path d="M25.4 16 Q28.6 12.8 32.6 16 L31.6 19.6 L29.8 17 Q27.8 15.4 25.4 16Z" fill="#2ea22c"/>
<path d="M24 18.6 L27.4 19.4 L26.4 23" fill="none" stroke="#fff8a0" stroke-width="0.9"/>
<rect x="40.2" y="14.4" width="11.2" height="10.6" fill="#1c3fb0"/><rect x="41.800000000000004" y="15.6" width="7.999999999999999" height="5.512" fill="#9ad6f8"/><rect x="43.2" y="16.2" width="5.199999999999999" height="3.1799999999999997" fill="#e4f4fe"/><rect x="41.400000000000006" y="21.184" width="8.799999999999999" height="3.416" fill="#3f8cf0"/><rect x="44.456" y="21.82" width="3.36" height="3.1799999999999997" fill="#0b1f88"/>
<rect x="59" y="14.4" width="8.6" height="8.4" fill="none" stroke="#1c3fb0" stroke-width="1.4"/>
<rect x="61.8" y="16.6" width="8.8" height="8.4" fill="#1c3fb0"/><rect x="63.4" y="17.8" width="5.6000000000000005" height="4.368" fill="#9ad6f8"/><rect x="64.8" y="18.400000000000002" width="2.8000000000000007" height="2.52" fill="#e4f4fe"/><rect x="63.0" y="21.976000000000003" width="6.4" height="2.624" fill="#3f8cf0"/><rect x="65.14399999999999" y="22.48" width="2.64" height="2.52" fill="#0b1f88"/>
<text x="82.1" y="16.9" font-family="Liberation Sans, sans-serif" font-size="4.4" fill="#111" textLength="12.8" lengthAdjust="spacingAndGlyphs" font-weight="bold" >NORM</text>
<path d="M83.4 24.4 Q83 19.4 87.2 19.2 L88 22 L88.8 19.2 Q93 19.4 92.7 24.4 L89.4 23.8 L88 24.8 L86.6 23.8Z" fill="#f4f6ff" stroke="#2030c0" stroke-width="1.2"/>
<rect x="102" y="15.6" width="11.2" height="7.6" rx="1.6" fill="none" stroke="#34466a" stroke-width="1.3" stroke-dasharray="2.2 1.4"/>
<path d="M121 14.4 H131.6 V17 Q128.8 17.4 128.5 19.2 V21.4 Q128.8 23.4 131.6 23.8 V26.2 H121 V23.8 Q123.8 23.4 124.1 21.4 V19.2 Q123.8 17.4 121 17Z" fill="#f4f01a" stroke="#6a6a10" stroke-width="0.9"/>
<rect x="140" y="16" width="11.2" height="3.4" fill="#6ab4f0" />
<path d="M141 19.2 L143 16.2 M144.4 19.2 L146.4 16.2 M147.8 19.2 L149.8 16.2" stroke="#fff" stroke-width="1"/>
<rect x="140" y="19.4" width="11.2" height="3" fill="#123a9a" />
<rect x="140" y="22.4" width="11.2" height="2.6" fill="#2a7ae0" />
<rect x="158.8" y="14.8" width="11.2" height="10.6" fill="#2e7f72" />
<path d="M158.8 18.3 H170 M158.8 21.9 H170 M164.4 14.8 V18.3 M161.6 18.3 V21.9 M167.2 18.3 V21.9 M164.4 21.9 V25.4" stroke="#58a898" stroke-width="0.7"/>
<path d="M176.8 25.6 L177.8 21.4 L186.2 13.8 L189.8 17.2 L181.4 24.8 Z" fill="#0c7a1e" stroke="#06300e" stroke-width="1.0"/>
<path d="M198 19 L201 15.4 H207.2 M198 19 H207.2 M198 21.8 H207.2 M198 24.4 H207.2 M198 19 V24.4 M201.2 19 V24.4 M204.2 19 V24.4 M207.2 15.4 V24.4 M204.2 15.4 L201.4 19 M207.2 15.4 L204.4 19" fill="none" stroke="#222" stroke-width="1.1" stroke-dasharray="1.6 0.8"/>
<circle cx="230.00" cy="19.90" r="2.3" fill="#1b6a20"/>
<circle cx="228.83" cy="22.73" r="2.3" fill="#1b6a20"/>
<circle cx="226.00" cy="23.90" r="2.3" fill="#1b6a20"/>
<circle cx="223.17" cy="22.73" r="2.3" fill="#1b6a20"/>
<circle cx="222.00" cy="19.90" r="2.3" fill="#1b6a20"/>
<circle cx="223.17" cy="17.07" r="2.3" fill="#1b6a20"/>
<circle cx="226.00" cy="15.90" r="2.3" fill="#1b6a20"/>
<circle cx="228.83" cy="17.07" r="2.3" fill="#1b6a20"/>
<circle cx="226" cy="19.9" r="4.4" fill="#1f7a24"/>
<polygon points="249.99,21.57 247.07,24.49 242.93,24.49 240.01,21.57 240.01,17.43 242.93,14.51 247.07,14.51 249.99,17.43" fill="#ff8a08" stroke="#c86400" stroke-width="0.6"/>
<rect x="258.2" y="14" width="11.4" height="11.6" fill="#e8955a" stroke="#3a2010" stroke-width="1.0" />
<rect x="262.4" y="18.3" width="3" height="3" fill="#f4c49a" stroke="#3a2010" stroke-width="0.8" />
<path d="M258.2 14 L262.4 18.3 M269.6 14 L265.4 18.3 M258.2 25.6 L262.4 21.3 M269.6 25.6 L265.4 21.3" stroke="#3a2010" stroke-width="0.7"/>
<rect x="282.8" y="15" width="10.4" height="10" fill="#8ed35e" stroke="#1e6b1e" stroke-width="1.2" />
<path d="M286.2 15 V25 M289.7 15 V25 M282.8 18.3 H293.2 M282.8 21.7 H293.2" stroke="#1e6b1e" stroke-width="1.2"/>
<rect x="305.4" y="14" width="6.4" height="7.6" fill="#e8e0f8" stroke="#7a58b8" stroke-width="0.9" />
<rect x="306.8" y="15.4" width="3.4" height="2" fill="#9a78d8" />
<path d="M316 14 V20.6 M314.2 18.8 L316 21.4 L317.8 18.8" stroke="#1c9a3c" stroke-width="1.2" fill="none"/>
<circle cx="306" cy="24.2" r="1" fill="#1030c0"/><path d="M307 24.2 H316.4 M314.6 22.6 L317.4 24.2 L314.6 25.8" stroke="#1848e0" stroke-width="1.2" fill="none"/>
<circle cx="313.6" cy="15.4" r="0.8" fill="#223"/>
<text x="325" y="16.6" font-family="Liberation Sans, sans-serif" font-size="4.4" fill="#d01818" textLength="11.4" lengthAdjust="spacingAndGlyphs" font-weight="bold" >CPZ</text>
<path d="M325 22.4 H337 M326.6 18.4 V26 M328.2 19.6 V25 M329.8 18 V26.4 M331.4 19.8 V24.8 M333 20.8 V24 M334.6 21.4 V23.4" stroke="#2040c8" stroke-width="0.9"/>
<text x="349.4" y="16.6" font-family="Liberation Sans, sans-serif" font-size="4.4" fill="#d01818" textLength="11" lengthAdjust="spacingAndGlyphs" font-weight="bold" >CPZ</text>
<path d="M350 18.4 V25.6 M350 19.4 L352 25.4 L354 18" stroke="#222" stroke-width="0.9" fill="none"/>
<path d="M354.6 18 H360 L357.3 21.8 L360 25.8 H354.6 L357.3 21.8Z" fill="#e8e030" stroke="#3a5a20" stroke-width="0.7"/><path d="M355.4 25.4 H359.2 L357.3 22.8Z" fill="#28a838"/>
<path d="M370.4 15.2 H368.4 V25.2 H370.4 M375.8 15.2 H377.8 V25.2 H375.8" stroke="#2848d0" stroke-width="1.1" fill="none"/>
<path d="M373.1 15 Q371.6 17.6 371.6 20 V25.2 M373.1 15 Q374.6 17.6 374.6 20 V25.2" stroke="#2848d0" stroke-width="1" fill="none"/>
<path d="M386.6 20.4 L388.4 25.2 L390.4 15 H399" stroke="#222" stroke-width="1" fill="none"/>
<path d="M393 17 H398.6 L395.8 21 L398.6 25.4 H393 L395.8 21Z" fill="#e8e030" stroke="#3a5a20" stroke-width="0.7"/><path d="M393.8 25 H397.8 L395.8 22.4Z" fill="#28a838"/>
<text x="390.6" y="24.6" font-family="Liberation Sans, sans-serif" font-size="4.4" fill="#2040c8" font-weight="bold" >z</text>
<path d="M522.4 25.6 V15.6 H531 V25.6 M526.7 15.6 V25.6 M520.6 18 H532.8 M520.6 21.4 H532.8 M524 14 H529.4" stroke="#262688" stroke-width="1.3" fill="none"/>
<rect x="521.2" y="18.8" width="11" height="1.8" fill="#d8b8ee" />
<rect x="521.2" y="22.2" width="11" height="1.6" fill="#e8b8d8" />
<path d="M520.4 25.6 H524.4 M529 25.6 H533" stroke="#262688" stroke-width="1.2"/>
<rect x="536.3" y="11.2" width="18.4" height="17.8" fill="#c3d3f1" stroke="#98b2e6" stroke-width="0.9" />
<path d="M540.4 23.6 L544.6 16 L549 20.4 L546.4 24.8 Z" fill="#d8e020"/><path d="M542 24.6 L544.6 18 L547.4 21 Z" fill="#f0a818"/>
<path d="M544.8 16.4 L548 17.2 L549.4 20.8 L551.8 22 L549 24 L546.4 24.6Z" fill="#58e088"/>
<circle cx="545.6" cy="21.4" r="1.5" fill="#e02818"/>
<path d="M547.4 18.8 L551.6 14.4" stroke="#144a38" stroke-width="1.4"/>
<path d="M770.2 54.8 H767.9 V58.5 H778.9 V54.8 H776.6" fill="none" stroke="#3c4a3c" stroke-width="1.5"/>
<path d="M767 50.8 L779.6 62.2 M779.6 50.8 L767 62.2" stroke="#e8566a" stroke-width="1.0"/>
<path d="M770.0 70.5 H768.0 V73.0 H776.6 V70.5 H774.6" fill="none" stroke="#45473a" stroke-width="1.4"/>
<path d="M769.6 76.6 H767.6 V80.2 H778.8 V76.6 H776.8" fill="none" stroke="#45473a" stroke-width="1.4"/>
<path d="M769.8 89.5 H767.8 V93.0 H778.8 V89.5 H776.8" fill="none" stroke="#45473a" stroke-width="1.4"/>
<path d="M769.8 96.4 H767.8 V99.9 H778.8 V96.4 H776.8" fill="none" stroke="#45473a" stroke-width="1.4"/>
<path d="M773.2 92.6 V97.6 M771.6 95.8 L773.2 98.2 L774.8 95.8" stroke="#c83838" stroke-width="0.9" fill="none"/>
<path d="M767.6 117.4 L778.8 107.4" stroke="#1a1a2a" stroke-width="1.3"/><circle cx="774.2" cy="115.6" r="1.5" fill="none" stroke="#2838a8" stroke-width="1"/><circle cx="777.2" cy="116" r="1.4" fill="none" stroke="#2838a8" stroke-width="1"/>
<rect x="763.2" y="123.2" width="18.4" height="18.8" fill="#c3d3f1" stroke="#8fa8de" stroke-width="0.9" />
<rect x="763.2" y="142" width="18.4" height="18.5" fill="#c3d3f1" stroke="#8fa8de" stroke-width="0.9" />
<rect x="763.2" y="160.5" width="18.4" height="19.4" fill="#c3d3f1" stroke="#8fa8de" stroke-width="0.9" />
<path d="M768.8 126 V138.4" stroke="#a88a78" stroke-width="1.3"/><path d="M770.8 126 L773.8 126 L778.8 136 L778.8 138.6 L775.8 138.6 Z" fill="#eaa684" stroke="#d89470" stroke-width="0.4"/>
<rect x="767.4" y="145.4" width="5" height="11.6" fill="#c8d8f8" stroke="#2a3a8a" stroke-width="0.9" />
<rect x="773.6" y="145.4" width="5" height="11.6" fill="#58d848" stroke="#2a6a2a" stroke-width="0.9" />
<path d="M768.6 147 L771.2 155.6" stroke="#d83030" stroke-width="1"/><path d="M769 152 H771" stroke="#2848d0" stroke-width="1.4"/><path d="M775 148 V154" stroke="#d83030" stroke-width="0.9"/>
<ellipse cx="772.8" cy="170" rx="5.6" ry="4.2" fill="none" stroke="#d83838" stroke-width="1"/><path d="M772.8 163.6 V176.6 M766 170 H779.6" stroke="#d83838" stroke-width="0.8"/><path d="M769 170 H776.6" stroke="#28a838" stroke-width="1.2"/>
<rect x="768.8" y="183.4" width="3" height="3" fill="none" stroke="#333" stroke-width="0.8" />
<rect x="774.6" y="183.4" width="3" height="3" fill="none" stroke="#333" stroke-width="0.8" />
<path d="M770.3 186.4 V194 M776.1 186.4 V190 M767.6 191.4 H779 M769.4 189.8 L767.4 191.4 L769.4 193 M777.2 189.8 L779.2 191.4 L777.2 193" stroke="#d83030" stroke-width="0.9" fill="none"/>
<rect x="767.2" y="202.6" width="11.6" height="9.8" fill="#d8ecff" stroke="#2a68c8" stroke-width="1.2" />
<rect x="767.2" y="202.6" width="11.6" height="2.2" fill="#2a68c8" />
<path d="M771 205 V212.4 M775 205 V212.4" stroke="#88b0e0" stroke-width="0.8"/>
<rect x="769.2" y="221.2" width="8.6" height="10.6" fill="#f8f0a0" stroke="#8a8a6a" stroke-width="0.7" />
<rect x="770" y="222" width="7" height="2.2" fill="#303848" />
<path d="M770 226 H777 M770 227.8 H777 M770 229.6 H777" stroke="#585858" stroke-width="1" stroke-dasharray="1.6 0.6"/>
<rect x="247.6" y="136" width="14.6" height="12.4" fill="#fbe9a4" rx="2" opacity="0.7"/>
<rect x="248.9" y="137.6" width="12" height="9.6" fill="#ffffff" stroke="#55553c" stroke-width="1.1" rx="1"/>
<path d="M250.8 141 H259.4 M250.8 144.4 H259.4" stroke="#3a4a7a" stroke-width="0.9" stroke-dasharray="1 1.4"/>
<rect x="246.6" y="150" width="16.6" height="15.4" fill="#c3d3f1" stroke="#7a94dc" stroke-width="0.9" />
<path d="M249.7 152.4 V163.8" stroke="#1a5a1a" stroke-width="1.2"/><path d="M249.7 152.4 H253 V154 H249.7Z" fill="#2a4a2a"/>
<ellipse cx="255.4" cy="156.2" rx="5.3" ry="1.45" fill="#eaf224" stroke="#2a6a2a" stroke-width="0.6"/>
<ellipse cx="255.4" cy="159.5" rx="5.3" ry="1.45" fill="#eaf224" stroke="#2a6a2a" stroke-width="0.6"/>
<ellipse cx="255.4" cy="162.6" rx="5.3" ry="1.45" fill="#eaf224" stroke="#2a6a2a" stroke-width="0.6"/>
<path d="M259.2 161.6 L261.2 163.6" stroke="#d83030" stroke-width="1.2"/>
<path d="M250.3 179.8 V172 M249 173.8 L250.3 171.6 L251.6 173.8 M249.2 178.3 H259.9" stroke="#221a1a" stroke-width="1.2" fill="none"/><path d="M251.6 176.4 Q252.6 172.8 258.2 172.2" stroke="#d88a78" stroke-width="0.9" fill="none"/>
<line x1="249" y1="186.4" x2="262" y2="186.4" stroke="#d8c49a" stroke-width="0.8" />
<line x1="249" y1="222.4" x2="262" y2="222.4" stroke="#d8c49a" stroke-width="0.8" />
<path d="M252.4 191.8 H259 M252.4 201 H259 M255.7 191.8 V201" stroke="#a8a49a" stroke-width="1.6"/>
<path d="M249.8 208.2 L261.4 219.4 M261.4 208.2 L249.8 219.4" stroke="#a8a49a" stroke-width="2.6"/>
<path d="M252 240 L253 233.4 H259.6 L260.6 240 Q256.4 242 252 240Z" fill="#a8a49a"/><path d="M251 235 L253.4 229.6 M254.8 229.4 L256.2 231.4" stroke="#a8a49a" stroke-width="1"/>
<rect x="249.4" y="246.2" width="11.8" height="9.4" fill="#c8c4b8" stroke="#a8a49a" stroke-width="0.9" />
<path d="M253.3 246.2 V255.6 M257.3 246.2 V255.6" stroke="#a8a49a" stroke-width="0.9"/>
<path d="M5.700000000000001 563.6999999999999 L0.9000000000000004 568.3" stroke="#b87a24" stroke-width="1.8" stroke-linecap="round"/><circle cx="8.3" cy="560.9" r="3.6" fill="#eef2f6" stroke="#38485a" stroke-width="1.3"/><path d="M6.300000000000001 560.9 H10.3 M8.3 558.9 V562.9" stroke="#1a2a3a" stroke-width="1.1"/>
<path d="M23.599999999999998 563.6999999999999 L18.799999999999997 568.3" stroke="#b87a24" stroke-width="1.8" stroke-linecap="round"/><circle cx="26.2" cy="560.9" r="3.6" fill="#eef2f6" stroke="#38485a" stroke-width="1.3"/><path d="M24.2 560.9 H28.2" stroke="#1a2a3a" stroke-width="1.1"/>
<path d="M41.0 563.6999999999999 L36.2 568.3" stroke="#b87a24" stroke-width="1.8" stroke-linecap="round"/><circle cx="43.6" cy="560.9" r="3.6" fill="#eef2f6" stroke="#38485a" stroke-width="1.3"/><rect x="41.800000000000004" y="559.3" width="3.6" height="3.2" fill="none" stroke="#38485a" stroke-width="0.8"/>
<path d="M58.699999999999996 563.4 L53.9 568.0" stroke="#b87a24" stroke-width="1.8" stroke-linecap="round"/><circle cx="61.3" cy="560.6" r="3.6" fill="#eef2f6" stroke="#38485a" stroke-width="1.3"/><path d="M58.9 560.6 H63.699999999999996 M61.3 558.2 V563.0 M59.5 558.8000000000001 L63.099999999999994 562.4 M63.099999999999994 558.8000000000001 L59.5 562.4" stroke="#1a2a3a" stroke-width="0.9"/>
<g transform="translate(77.5 563) rotate(0)"><path d="M-6.4 0 L-0.6 -6 V-2.6 H6.2 V2.6 H-0.6 V6 Z" fill="#1668e4" stroke="#0a3aa8" stroke-width="0.5"/><path d="M-4.6 -0.4 L-1.4 -3.6 V-1.2 H5 V0 Z" fill="#58a8f8" opacity="0.8"/></g>
<g transform="translate(94.8 563) rotate(180)"><path d="M-6.4 0 L-0.6 -6 V-2.6 H6.2 V2.6 H-0.6 V6 Z" fill="#1668e4" stroke="#0a3aa8" stroke-width="0.5"/><path d="M-4.6 -0.4 L-1.4 -3.6 V-1.2 H5 V0 Z" fill="#58a8f8" opacity="0.8"/></g>
<g transform="translate(112.7 563) rotate(-90)"><path d="M-6.4 0 L-0.6 -6 V-2.6 H6.2 V2.6 H-0.6 V6 Z" fill="#1668e4" stroke="#0a3aa8" stroke-width="0.5"/><path d="M-4.6 -0.4 L-1.4 -3.6 V-1.2 H5 V0 Z" fill="#58a8f8" opacity="0.8"/></g>
<g transform="translate(130 563) rotate(90)"><path d="M-6.4 0 L-0.6 -6 V-2.6 H6.2 V2.6 H-0.6 V6 Z" fill="#1668e4" stroke="#0a3aa8" stroke-width="0.5"/><path d="M-4.6 -0.4 L-1.4 -3.6 V-1.2 H5 V0 Z" fill="#58a8f8" opacity="0.8"/></g>
<path d="M143.60000000000002 565.4 Q145.8 561.6 149.8 560.8 L153.70000000000002 557.8 L153.0 562.4 Q152.20000000000002 566.4 148.20000000000002 567 Q145.4 567.2 143.60000000000002 565.4Z" fill="#141a4c"/><circle cx="150.4" cy="562" r="0.8" fill="#e8ecff"/><circle cx="144.20000000000002" cy="567.4" r="1.1" fill="#d82020"/><circle cx="151.0" cy="567.8" r="1" fill="#28a828"/><path d="M145.20000000000002 567.6 H150.0" stroke="#141c50" stroke-width="0.8"/>
<text x="159.0" y="562" font-family="Liberation Sans, sans-serif" font-size="6.4" fill="#d02030" font-weight="bold" >A</text><text x="162.39999999999998" y="565.4" font-family="Liberation Sans, sans-serif" font-size="6.6" fill="#2838b8" font-weight="bold" >B</text><text x="165.79999999999998" y="568.6" font-family="Liberation Sans, sans-serif" font-size="7" fill="#1a2070" font-weight="bold" >C</text><path d="M160.79999999999998 563.4 L166.2 568" stroke="#2838b8" stroke-width="0.5"/>
<line x1="176.9" y1="560.4" x2="188.5" y2="560.4" stroke="#2848c8" stroke-width="1.1" /><text x="179.9" y="566.8" font-family="Liberation Sans, sans-serif" font-size="5.6" fill="#1a8a2a" textLength="7" lengthAdjust="spacingAndGlyphs" font-weight="bold" >50</text>
<rect x="89.4" y="575.2" width="11.4" height="8.8" fill="#fffdf4" stroke="#3a2a1a" stroke-width="1.0" />
<rect x="89.4" y="575.2" width="11.4" height="2.2" fill="#2a2048" />
<path d="M91.4 580 H94 M91.4 582 H94 M95.4 580.6 H99" stroke="#3a2a1a" stroke-width="0.8"/>
<path d="M109.4 582.6 L106.4 585.6" stroke="#e06820" stroke-width="1.2"/><circle cx="112.7" cy="579.2" r="4.2" fill="#22c0ff" stroke="#10105a" stroke-width="1.9"/><circle cx="111.4" cy="578" r="1.3" fill="#b8f0ff"/>
<path d="M163 582.6 L166 575.6 M163 582.6 H172.4 M166 578 H172" stroke="#cdbf9f" stroke-width="1" fill="none" stroke-dasharray="2 1"/>
<path d="M181.6 575 V584 H190 M183 583 Q184 577 189 576.4" stroke="#cdbf9f" stroke-width="1" fill="none" stroke-dasharray="2 1"/>
<circle cx="203" cy="579.2" r="4.4" fill="none" stroke="#cdbf9f" stroke-width="1" stroke-dasharray="2 1.2"/><circle cx="203" cy="579.2" r="2.4" fill="#c8c0b0"/>
<line x1="214.5" y1="573" x2="214.5" y2="585.4" stroke="#ecdcb8" stroke-width="0.8" />
<text x="276.4" y="579.6" font-family="Liberation Sans, sans-serif" font-size="5.2" fill="#401010" textLength="12.4" lengthAdjust="spacingAndGlyphs" font-weight="bold" >DXF</text>
<path d="M276 580.6 H289.6 L286 584.6 Q282.8 587.4 279.6 584.6 Z" fill="#e02020"/>
<line x1="276" y1="576.2" x2="289.6" y2="576.2" stroke="#d02020" stroke-width="0.7" />
<path d="M296.4 575.6 H302 L304.4 578 V586.4 H296.4Z" fill="#f4f4f4" stroke="#a0a0a0" stroke-width="0.8"/><circle cx="301.6" cy="582" r="2.4" fill="#f8f8ff" stroke="#9098b0" stroke-width="0.9"/><path d="M303.4 583.8 L305.8 586.6" stroke="#d0a060" stroke-width="1.1"/>
<text x="312.4" y="578.4" font-family="Liberation Sans, sans-serif" font-size="4.4" fill="#c81818" textLength="11" lengthAdjust="spacingAndGlyphs" font-weight="bold" >CPZ</text>
<rect x="314" y="580" width="8.4" height="6.2" fill="#f4f8f0" stroke="#3a4a3a" stroke-width="0.8" />
<path d="M316.8 580 V586.2 M319.6 580 V586.2 M314 582.2 H322.4 M314 584.2 H322.4" stroke="#3a4a3a" stroke-width="0.6"/><path d="M316 587.4 H320.4" stroke="#2a6a2a" stroke-width="0.9"/>
<text x="329.40000000000003" y="580" font-family="Liberation Sans, sans-serif" font-size="6.4" fill="#d02030" font-weight="bold" >A</text><text x="332.8" y="583.4" font-family="Liberation Sans, sans-serif" font-size="6.6" fill="#2838b8" font-weight="bold" >B</text><text x="336.20000000000005" y="586.6" font-family="Liberation Sans, sans-serif" font-size="7" fill="#1a2070" font-weight="bold" >C</text><path d="M331.20000000000005 581.4 L336.6 586" stroke="#2838b8" stroke-width="0.5"/>
<text x="348" y="586.4" font-family="Liberation Serif, sans-serif" font-size="14.6" fill="#1818d8" textLength="10.4" lengthAdjust="spacingAndGlyphs" font-weight="bold" >T</text>
<line x1="364.6" y1="578.3" x2="376.20000000000005" y2="578.3" stroke="#2848c8" stroke-width="1.1" /><text x="367.6" y="584.6999999999999" font-family="Liberation Sans, sans-serif" font-size="5.6" fill="#1a8a2a" textLength="7" lengthAdjust="spacingAndGlyphs" font-weight="bold" >50</text>
<path d="M383.8 584.0 Q386 580.2 390 579.4 L393.9 576.4 L393.2 581.0 Q392.4 585.0 388.4 585.6 Q385.6 585.8000000000001 383.8 584.0Z" fill="#141a4c"/><circle cx="390.6" cy="580.6" r="0.8" fill="#e8ecff"/><circle cx="384.4" cy="586.0" r="1.1" fill="#d82020"/><circle cx="391.2" cy="586.4" r="1" fill="#28a828"/><path d="M385.4 586.2 H390.2" stroke="#141c50" stroke-width="0.8"/>
<defs><radialGradient id="gHelp" cx="0.4" cy="0.3" r="0.8"><stop offset="0" stop-color="#9ad0ff"/><stop offset="0.6" stop-color="#2a7ae8"/><stop offset="1" stop-color="#1448b8"/></radialGradient></defs>
<circle cx="406.4" cy="581.4" r="6" fill="url(#gHelp)"/>
<text x="403.8" y="584.8" font-family="Liberation Sans, sans-serif" font-size="9.4" fill="#ffffff" font-weight="bold" >?</text>
<line x1="417.4" y1="574" x2="417.4" y2="588" stroke="#c8c6b0" stroke-width="0.8" />
<line x1="418.2" y1="574" x2="418.2" y2="588" stroke="#ffffff" stroke-width="0.7" />
<g transform="translate(435.4 581.7) rotate(0)"><path d="M-5.4 0 L-0.8 -3.9 V-1.7 H5.2 V1.7 H-0.8 V3.9Z" fill="#3ad0d0" stroke="#104848" stroke-width="0.9"/></g>
<g transform="translate(503.2 581.7) rotate(180)"><path d="M-5.4 0 L-0.8 -3.9 V-1.7 H5.2 V1.7 H-0.8 V3.9Z" fill="#3ad0d0" stroke="#104848" stroke-width="0.9"/></g>
<rect x="444.4" y="572.2" width="50.6" height="16" fill="#ffffff" stroke="#e4e2d4" stroke-width="0.6" />
<text x="467.4" y="583.6" font-family="Liberation Sans, sans-serif" font-size="7.4" fill="#5a1c2c" >1</text>
<text x="515.4" y="578.8" font-family="Liberation Sans, sans-serif" font-size="5.4" fill="#111" textLength="10.4" lengthAdjust="spacingAndGlyphs" font-weight="bold" >INV</text>
<path d="M515.2 587.4 L517.6 580.2 H521.4 L519.6 587.4Z" fill="#28b838" stroke="#186828" stroke-width="0.5"/><path d="M520.6 587.4 L523 580.4 L527 587.4Z" fill="#d03050"/><path d="M523 580.4 L527 587.4 H524Z" fill="#3848c8"/>
<path d="M779.6 599.6 h1 M777.6 601.6 h1 M779.6 601.6 h1 M775.6 603.6 h1 M777.6 603.6 h1 M779.6 603.6 h1" stroke="#b8b4a0" stroke-width="1"/>
</g>
</svg>
</body></html>
